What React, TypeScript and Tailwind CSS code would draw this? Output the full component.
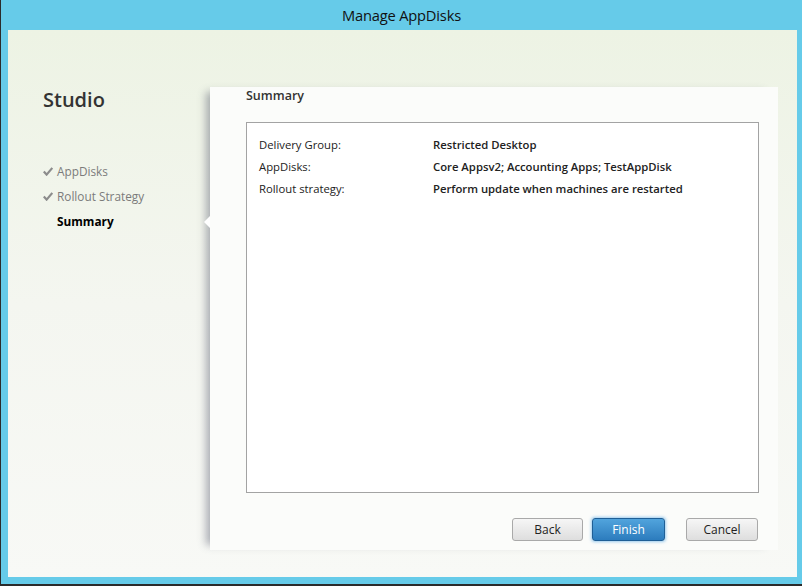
const font = "font-['Segoe_UI','Open_Sans','Noto_Sans',sans-serif]";

const SUMMARY_ROWS = [
  { label: "Delivery Group:", value: "Restricted Desktop" },
  { label: "AppDisks:", value: "Core Appsv2; Accounting Apps; TestAppDisk" },
  { label: "Rollout strategy:", value: "Perform update when machines are restarted" },
];

function Check() {
  return (
    <svg width="10" height="9" viewBox="0 0 10 9" className="shrink-0">
      <path d="M0.8 4.6 L3.6 7.6 L9.3 1" fill="none" stroke="#8c8c8c" strokeWidth="2.2" />
    </svg>
  );
}

function Step({ label, done, active }: { label: string; done?: boolean; active?: boolean }) {
  return (
    <div className="flex items-center h-[25px] gap-[4px]">
      <div className="w-[10px] flex items-center">{done && <Check />}</div>
      <span className={active ? "font-bold text-black" : "text-[#7b7b7b]"}>{label}</span>
    </div>
  );
}

export default function App() {
  return (
    <div className={`w-[802px] h-[586px] flex flex-col bg-[#66cbe9] border-l border-b-2 border-[#2b2b2b] ${font}`}>
      {/* Title bar */}
      <div className="h-[30px] flex items-center justify-center text-[14.7px] text-[#111] tracking-[-0.2px]">
        Manage AppDisks
      </div>

      {/* Client area */}
      <div className="flex-1 ml-[7px] mr-[5px] mb-[7px] flex bg-gradient-to-b from-[#edf3e4] via-[#f4f6f0] to-[#f8f9f6]">
        {/* Left nav */}
        <div className="w-[202px] pl-[35px] pt-[58px] text-[11.8px]">
          <h1 className="text-[20px] font-semibold text-[#333] leading-[24px]">Studio</h1>
          <div className="mt-[47px]">
            <Step label="AppDisks" done />
            <Step label="Rollout Strategy" done />
            <Step label="Summary" active />
          </div>
        </div>

        {/* Right page */}
        <div className="relative w-[568px] mt-[57px] mb-[27px] bg-[#fbfcfa] shadow-[-9px_0_8px_-5px_rgba(80,85,105,0.45)] pl-[36px] pr-[20px] flex flex-col">
          <div className="absolute left-[-6px] top-[129px] w-0 h-0 border-y-[6px] border-y-transparent border-r-[6px] border-r-white" />
          <h2 className="text-[12.5px] font-semibold text-[#333] leading-[16px] pt-[1px]">Summary</h2>
          <div className="mt-[18px] h-[371px] w-[513px] bg-white border border-[#a3a3a3] pt-[11px] pl-[12px] text-[11.3px] text-[#222]">
            {SUMMARY_ROWS.map(r => (
              <div key={r.label} className="flex h-[22px] items-center">
                <span className="w-[174px]">{r.label}</span>
                <span className="font-semibold">{r.value}</span>
              </div>
            ))}
          </div>
          <div className="mt-[25px] flex text-[12px]">
            <button className="ml-[266px] w-[71px] h-[23px] rounded-[3px] border border-[#a9a9a9] bg-gradient-to-b from-[#f6f6f6] to-[#dedede] text-[#222]">
              Back
            </button>
            <button className="ml-[9px] w-[73px] h-[23px] rounded-[3px] border border-[#1f5f96] bg-gradient-to-b from-[#51a4dd] to-[#2c7cbd] text-white shadow-[0_0_3px_1px_rgba(90,170,230,0.6)]">
              Finish
            </button>
            <button className="ml-[21px] w-[72px] h-[23px] rounded-[3px] border border-[#a9a9a9] bg-gradient-to-b from-[#f6f6f6] to-[#dedede] text-[#222]">
              Cancel
            </button>
          </div>
        </div>
      </div>
    </div>
  );
}
